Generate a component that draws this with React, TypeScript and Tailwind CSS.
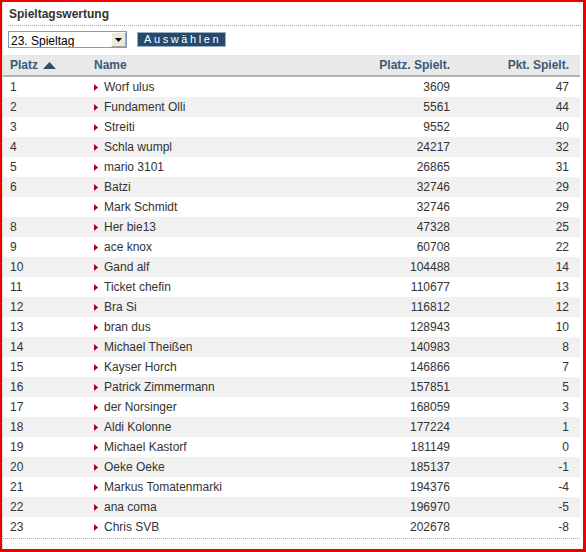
import { useState } from "react"

const rows = [
  { platz: "1", name: "Worf ulus", pos: 3609, pkt: 47 },
  { platz: "2", name: "Fundament Olli", pos: 5561, pkt: 44 },
  { platz: "3", name: "Streiti", pos: 9552, pkt: 40 },
  { platz: "4", name: "Schla wumpl", pos: 24217, pkt: 32 },
  { platz: "5", name: "mario 3101", pos: 26865, pkt: 31 },
  { platz: "6", name: "Batzi", pos: 32746, pkt: 29 },
  { platz: "", name: "Mark Schmidt", pos: 32746, pkt: 29 },
  { platz: "8", name: "Her bie13", pos: 47328, pkt: 25 },
  { platz: "9", name: "ace knox", pos: 60708, pkt: 22 },
  { platz: "10", name: "Gand alf", pos: 104488, pkt: 14 },
  { platz: "11", name: "Ticket chefin", pos: 110677, pkt: 13 },
  { platz: "12", name: "Bra Si", pos: 116812, pkt: 12 },
  { platz: "13", name: "bran dus", pos: 128943, pkt: 10 },
  { platz: "14", name: "Michael Theißen", pos: 140983, pkt: 8 },
  { platz: "15", name: "Kayser Horch", pos: 146866, pkt: 7 },
  { platz: "16", name: "Patrick Zimmermann", pos: 157851, pkt: 5 },
  { platz: "17", name: "der Norsinger", pos: 168059, pkt: 3 },
  { platz: "18", name: "Aldi Kolonne", pos: 177224, pkt: 1 },
  { platz: "19", name: "Michael Kastorf", pos: 181149, pkt: 0 },
  { platz: "20", name: "Oeke Oeke", pos: 185137, pkt: -1 },
  { platz: "21", name: "Markus Tomatenmarki", pos: 194376, pkt: -4 },
  { platz: "22", name: "ana coma", pos: 196970, pkt: -5 },
  { platz: "23", name: "Chris SVB", pos: 202678, pkt: -8 },
]

export default function App() {
  const [spieltag, setSpieltag] = useState("23")

  return (
    <div
      className="w-[586px] h-[552px] bg-white border-[#ee0000] border-t-2 border-l-2 border-r-[3px] border-b-[3px] overflow-hidden text-[12px] text-[#333]"
      style={{ fontFamily: '"Liberation Sans", Arial, sans-serif' }}
    >
      <div className="h-full mr-[2px] border-l border-dotted border-[#bbb] pl-[5px]">
        {/* title */}
        <div className="h-[24px] flex items-end pb-[2px] pl-[1px] border-b border-dotted border-[#aaa] font-bold text-[12px] text-[#333]">
          Spieltagswertung
        </div>

        {/* selection */}
        <div className="flex items-center gap-[10px] h-[17px] mt-[5px]">
          <div className="relative w-[119px] h-[17px] border border-[#7f9db9] bg-white flex items-center">
            <select
              value={spieltag}
              onChange={(e) => setSpieltag(e.target.value)}
              className="appearance-none w-full h-full pl-[2px] text-[12px] text-black bg-transparent outline-none"
              style={{ fontFamily: '"Liberation Sans", Arial, sans-serif' }}
            >
              {Array.from({ length: 34 }, (_, i) => (
                <option key={i} value={String(i + 1)}>
                  {i + 1}. Spieltag
                </option>
              ))}
            </select>
            <div className="absolute right-0 top-0 w-[15px] h-[15px] bg-[#ece9d8] border border-[#aca899] border-t-white border-l-white flex items-center justify-center pointer-events-none">
              <svg width="7" height="4" viewBox="0 0 7 4">
                <path d="M0 0 L7 0 L3.5 4 Z" fill="#000" />
              </svg>
            </div>
          </div>
          <button className="h-[15px] w-[89px] pl-[6px] bg-[#234a6e] border border-[#9aaec2] text-white text-[11px] tracking-[2.6px] leading-none flex items-center">
            Auswählen
          </button>
        </div>

        {/* table */}
        <div className="mt-[7px] -ml-[5px] mr-[1px]">
          <div className="h-[22px] bg-[#e9e9e9] border-b-2 border-[#b5b5b5] flex items-center font-bold text-[#3b5a78]">
            <div className="w-[91px] pl-[7px] flex items-center gap-[5px]">
              Platz
              <svg width="13" height="7" viewBox="0 0 13 7">
                <path d="M0 7 L6.5 0 L13 7 Z" fill="#2d4f70" />
              </svg>
            </div>
            <div className="flex-1">Name</div>
            <div className="w-[120px] text-right">Platz. Spielt.</div>
            <div className="w-[130px] pr-[11px] text-right">Pkt. Spielt.</div>
          </div>

          {rows.map((r, i) => (
            <div
              key={i}
              className={`h-[20px] flex items-center ${i % 2 === 1 ? "bg-[#f1f1f1]" : "bg-white"}`}
            >
              <div className="w-[91px] pl-[7px]">{r.platz}</div>
              <div className="flex-1 flex items-center">
                <svg width="4" height="7" viewBox="0 0 4 7" className="mr-[6px]">
                  <path d="M0 0 L4 3.5 L0 7 Z" fill="#a8001a" />
                </svg>
                {r.name}
              </div>
              <div className="w-[120px] text-right">{r.pos}</div>
              <div className="w-[130px] pr-[11px] text-right">{r.pkt}</div>
            </div>
          ))}
          <div className="mt-[1px] border-t border-dotted border-[#aaa]"></div>
        </div>
      </div>
    </div>
  )
}
